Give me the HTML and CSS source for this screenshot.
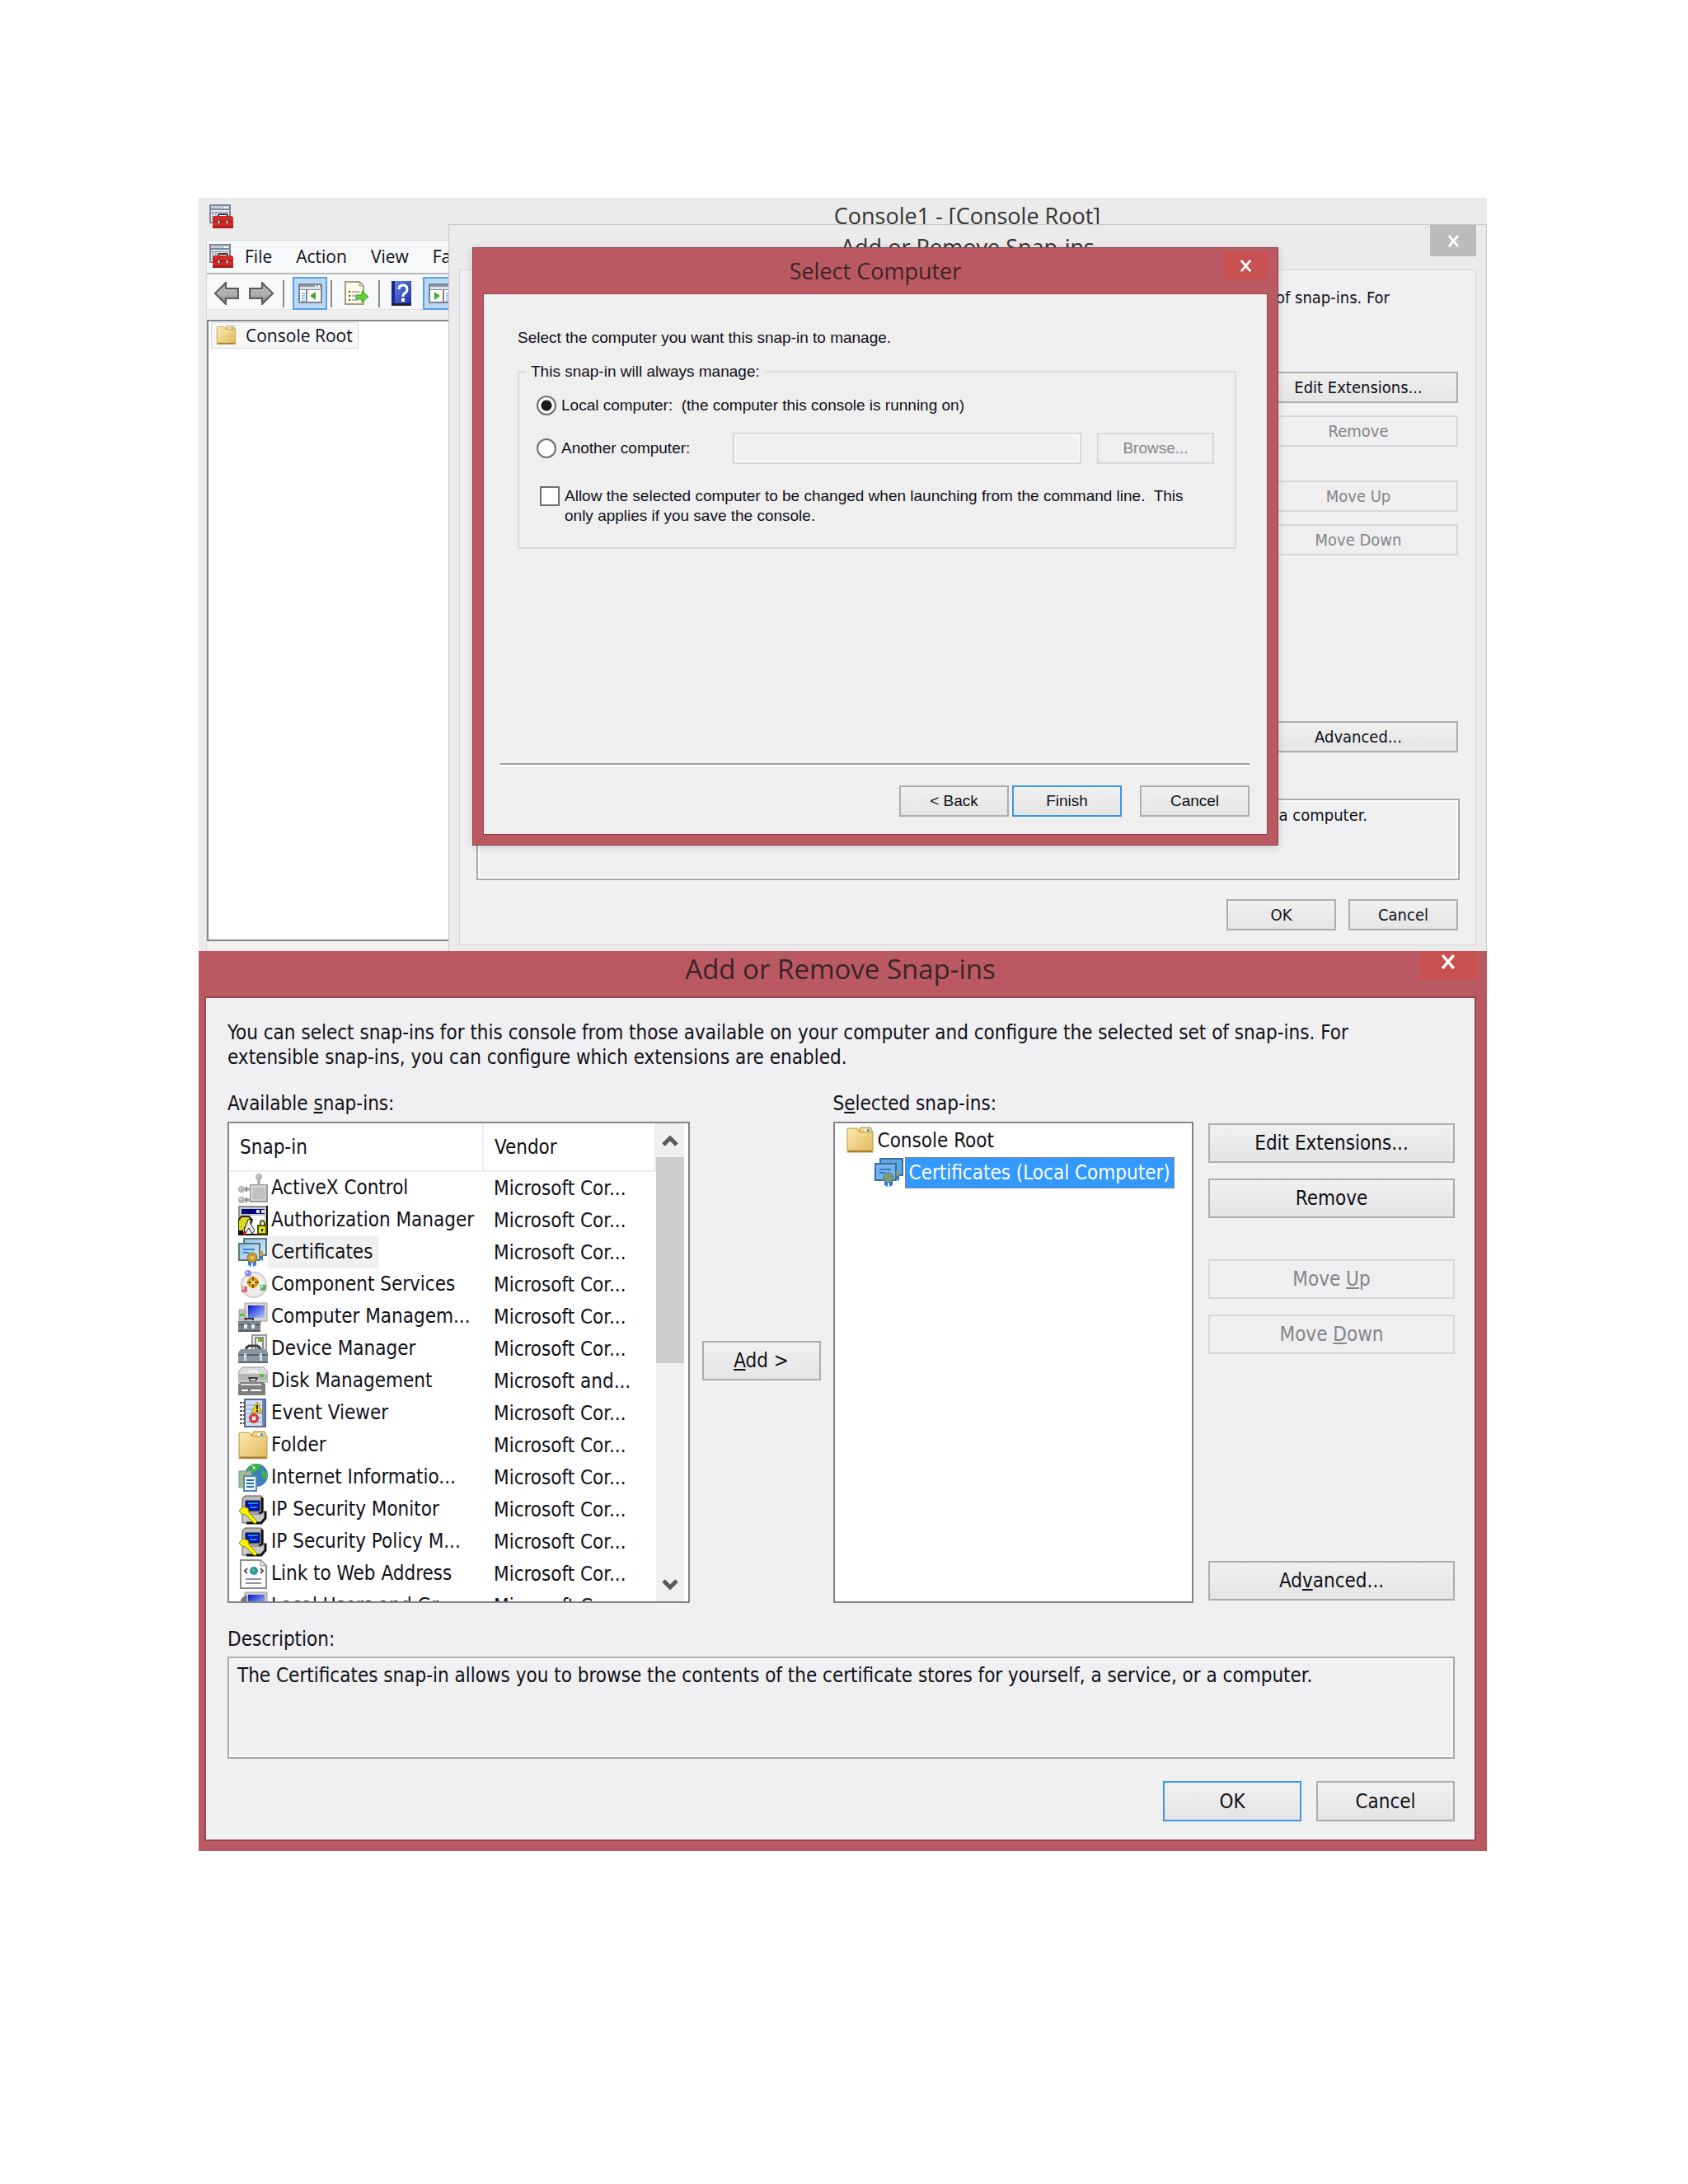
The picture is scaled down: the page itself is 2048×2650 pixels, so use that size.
FILE: index.html
```html
<!DOCTYPE html>
<html lang="en">
<head>
<meta charset="utf-8">
<title>Add or Remove Snap-ins</title>
<link rel="stylesheet" href="styles.css">
</head>
<body>
<svg class="sprite" aria-hidden="true">
  <defs>
    <linearGradient id="g-folder" x1="0" y1="0" x2="1" y2="1"><stop offset="0" stop-color="#fdebb0"/><stop offset="1" stop-color="#e3b65a"/></linearGradient>
    <linearGradient id="g-arrow" x1="0" y1="0" x2="0" y2="1"><stop offset="0" stop-color="#8c8c8c"/><stop offset=".5" stop-color="#b4b4b4"/><stop offset="1" stop-color="#7a7a7a"/></linearGradient>
    <linearGradient id="g-help" x1="0" y1="0" x2="1" y2="1"><stop offset="0" stop-color="#6a8ae6"/><stop offset="1" stop-color="#1c2fa6"/></linearGradient>
    <linearGradient id="g-screen" x1="0" y1="0" x2="1" y2="1"><stop offset="0" stop-color="#0018c8"/><stop offset="1" stop-color="#b8ccff"/></linearGradient>
    <linearGradient id="g-cert" x1="0" y1="0" x2="1" y2="1"><stop offset="0" stop-color="#8fc0e8"/><stop offset="1" stop-color="#d4ecfa"/></linearGradient>
  </defs>
  <symbol id="i-mmc" viewBox="0 0 29 29">
    <path d="M1 1h24v21H1z" fill="#e9eef5" stroke="#7d8797" stroke-width="2"/>
    <path d="M2 2h22v3H2z" fill="#c3cfe0"/><path d="M2 5h22v2H2zM2 9h22v1H2z" fill="#7d8797"/>
    <path d="M18 3h2v2h-2zM21 3h2v2h-2z" fill="#fff"/><path d="M3 12h3M3 15h3M3 18h3" stroke="#3a6fb0" stroke-width="1"/><path d="M8 10v12" stroke="#7d8797"/>
    <path d="M11 15v-2q0-1 1-1h9q1 0 1 1v2" fill="none" stroke="#333" stroke-width="2"/>
    <path d="M5 14h22l2 2v13H4V16z" fill="#d52a26"/><path d="M5 20h23v1H5z" fill="#8d1512"/><path d="M4 26h25v3H4z" fill="#b01c1a"/>
    <path d="M10 19h3v5h-3zM20 19h3v5h-3z" fill="#e8dcdc" stroke="#6b2020" stroke-width="1"/>
  </symbol>
  <symbol id="i-back" viewBox="0 0 30 28">
    <path d="M1 14L14 1v7h15v12H14v7z" fill="url(#g-arrow)" stroke="#5c5c5c" stroke-width="2"/><path d="M4 14L12 6v4h14" fill="none" stroke="#c9c9c9"/>
  </symbol>
  <symbol id="i-fwd" viewBox="0 0 30 28">
    <path d="M29 14L16 1v7H1v12h15v7z" fill="url(#g-arrow)" stroke="#5c5c5c" stroke-width="2"/><path d="M4 10h14V6l8 8" fill="none" stroke="#c9c9c9"/>
  </symbol>
  <symbol id="i-tree" viewBox="0 0 29 24">
    <path d="M1 1h27v22H1z" fill="#fff" stroke="#7a8494" stroke-width="2"/><path d="M2 2h25v2H2z" fill="#8d97a8"/><path d="M2 4h25v3H2z" fill="#dfe5ee"/><path d="M2 7h25v1H2z" fill="#7a8494"/>
    <path d="M20 2h2v2h-2zM24 2h2v2h-2z" fill="#fff"/><path d="M10 8v15" stroke="#7a8494" stroke-width="2"/><path d="M4 12h4M4 15h4M4 18h4M4 21h4" stroke="#3b7bd0" stroke-width="1"/><path d="M21 10v10l-7-5z" fill="#3fae2a"/>
  </symbol>
  <symbol id="i-actions" viewBox="0 0 29 24">
    <path d="M1 1h27v22H1z" fill="#fff" stroke="#7a8494" stroke-width="2"/><path d="M2 2h25v2H2z" fill="#8d97a8"/><path d="M2 4h25v3H2z" fill="#dfe5ee"/><path d="M2 7h25v1H2z" fill="#7a8494"/>
    <path d="M18 8v15" stroke="#7a8494" stroke-width="2"/><path d="M21 12h5M21 15h5M21 18h5M21 21h5" stroke="#3b7bd0" stroke-width="1"/><path d="M7 10v10l7-5z" fill="#3fae2a"/>
  </symbol>
  <symbol id="i-export" viewBox="0 0 30 30">
    <path d="M1 1h17l5 5v22H1z" fill="#fffde9" stroke="#a39b7c" stroke-width="2"/><path d="M18 1v5h5z" fill="#e4dfc2" stroke="#a39b7c"/>
    <path d="M5 12h2v2H5zM5 17h2v2H5zM5 22h2v2H5z" fill="#444"/><path d="M9 13h10M9 18h6M9 23h7" stroke="#6b6b6b" stroke-width="1"/>
    <path d="M14 17h7v-5l8 7-8 7v-4h-7z" fill="#5fd43c" stroke="#35a01f"/>
  </symbol>
  <symbol id="i-help" viewBox="0 0 24 30">
    <path d="M0 0h24v30H0z" fill="url(#g-help)"/><path d="M0 0h4v30H0z" fill="#16299a"/><path d="M0 27h24v3H0z" fill="#223"/>
    <path d="M9 10q0-5 5-5t5 5q0 3-3 5-2 1-2 4" fill="none" stroke="#fff" stroke-width="3"/><path d="M12 21h4v4h-4z" fill="#fff"/>
  </symbol>
  <symbol id="i-folder" viewBox="0 0 32 32">
    <path d="M15 4l2-3h11l2 3v4H15z" fill="#f5d98d" stroke="#b9923f"/><path d="M21 3h7v3h-7z" fill="#fff"/><path d="M24 3h3v3h-3z" fill="#4a9ad4"/>
    <path d="M1 4q0-2 2-2h9l3 4h16v24H1z" fill="url(#g-folder)" stroke="#bd9645"/><path d="M2 29h28" stroke="#a87d2c" stroke-width="2"/>
  </symbol>
  <symbol id="i-cert" viewBox="0 0 36 36">
    <path d="M7 1h27v20H7z" fill="url(#g-cert)" stroke="#56797c" stroke-width="2"/>
    <path d="M1 7h25v20H1z" fill="url(#g-cert)" stroke="#56797c" stroke-width="2"/><path d="M6 14h14M6 18h7" stroke="#3c7fd0" stroke-width="2"/>
    <path d="M12 27h4v8l-4-2zM18 27h4v6l-4 2z" fill="#2c7ede"/><circle cx="17" cy="24" r="6" fill="#c59b34" stroke="#8c6e22"/><circle cx="17" cy="24" r="2" fill="#ecd07c"/><path d="M27 22h3v6l-3-2z" fill="#2c7ede"/><path d="M26 16h4v6h-4z" fill="#c59b34"/>
  </symbol>
  <symbol id="i-cert-on" viewBox="0 0 36 36">
    <path d="M7 1h27v20H7z" fill="#5fa6e6" stroke="#3d6f9c" stroke-width="2"/>
    <path d="M1 7h25v20H1z" fill="#74b4ee" stroke="#3d6f9c" stroke-width="2"/><path d="M6 14h14M6 18h7" stroke="#2f73d0" stroke-width="2"/>
    <path d="M12 27h4v8l-4-2zM18 27h4v6l-4 2z" fill="#1f7cf0"/><circle cx="17" cy="24" r="6" fill="#7c9a78" stroke="#5b7a68"/><path d="M27 22h3v6l-3-2z" fill="#1f7cf0"/><path d="M26 16h4v6h-4z" fill="#7c9a78"/>
  </symbol>
  <symbol id="i-activex" viewBox="0 0 36 36">
    <path d="M25 3v12M4 19h14M4 32h14" stroke="#a2a2a2" stroke-width="3"/><path d="M15 14h20v20H15z" fill="#cfcfcf" stroke="#9a9a9a" stroke-width="2"/><path d="M18 17h14v14H18z" fill="#c2c2c4"/><path d="M16 15h18M16 15v18" stroke="#f0f0f0"/>
    <circle cx="25" cy="4" r="4" fill="#b5b5b5"/><circle cx="4" cy="19" r="4" fill="#b5b5b5"/><circle cx="4" cy="32" r="4" fill="#b5b5b5"/><path d="M10 16v6M10 29v6" stroke="#888" stroke-width="2"/><circle cx="24" cy="3" r="1" fill="#eee"/><circle cx="3" cy="18" r="1" fill="#eee"/><circle cx="3" cy="31" r="1" fill="#eee"/>
  </symbol>
  <symbol id="i-auth" viewBox="0 0 36 36">
    <path d="M0 0h36v36H0z" fill="#111"/><path d="M0 0h34v2H2v20H0z" fill="#8f8f8f"/><path d="M2 2h32v32H2z" fill="#c6c6c6"/><path d="M4 4h28v6H4z" fill="#00007e"/><path d="M22 5h4v4h-4zM28 5h4v4h-4z" fill="#ddd"/><path d="M4 12h28v22H4z" fill="#fff"/>
    <path d="M0 18l4-5h9l4 4-3 8-6 2v9H0z" fill="#d8d820" stroke="#222" stroke-width="2"/><path d="M12 17l3-1v6l5 8-3 4-4-7-4 6-2-3z" fill="#eee" stroke="#111" stroke-width="1"/><path d="M0 30h6v6H0z" fill="#111"/><path d="M6 32h3v3H6z" fill="#e00"/>
    <path d="M27 25v-4q0-3 2-3t3 3v4" fill="none" stroke="#555500" stroke-width="2"/><path d="M24 24h10v10H24z" fill="#e2e222" stroke="#555500" stroke-width="2"/><path d="M28 28h2v3h-2z" fill="#111"/>
  </symbol>
  <symbol id="i-com" viewBox="0 0 36 36">
    <circle cx="19" cy="18" r="15" fill="#ededed" stroke="#cfcfcf" stroke-width="2"/><circle cx="18" cy="15" r="7" fill="#f0b71c"/><path d="M18 8v14M11 15h14" stroke="#7d5206" stroke-width="2"/><circle cx="18" cy="15" r="5" fill="none" stroke="#9a6a0c"/><circle cx="18" cy="15" r="2" fill="#fff1b0"/>
    <circle cx="12" cy="4" r="4" fill="#8c8fe0"/><circle cx="11" cy="3" r="1" fill="#fff"/><path d="M4 20h7v7H4z" fill="#d8727c"/><path d="M5 21h2v2H5z" fill="#fff"/><path d="M27 18h7v7h-7z" fill="#5fae6c"/><path d="M28 19h2v2h-2z" fill="#fff"/>
  </symbol>
  <symbol id="i-compmgmt" viewBox="0 0 36 36">
    <path d="M8 1h27v22H8z" fill="#d9d6d0" stroke="#a3a19c"/><path d="M12 4h20v15H12z" fill="url(#g-screen)"/><path d="M1 9h7v13H1z" fill="#c3c3c3" stroke="#999"/><path d="M2 14h5v3H2z" fill="#3fc43a"/><path d="M22 23h6v3h-6z" fill="#b5b5b5"/>
    <path d="M9 22v-2h9v2" fill="none" stroke="#333" stroke-width="2"/><path d="M0 23h27v12H0z" fill="#77858f"/><path d="M0 27h27v1H0z" fill="#3f4a52"/><path d="M0 34h27v2H0z" fill="#505b63"/><path d="M7 27h4v5H7zM16 27h4v5h-4z" fill="#e4e9ec"/>
  </symbol>
  <symbol id="i-device" viewBox="0 0 36 36">
    <path d="M17 1h17v22H17z" fill="#f3f3f3" stroke="#9b9b9b" stroke-width="2"/><path d="M21 4h9v14h-9z" fill="none" stroke="#8a8a8a" stroke-width="2"/><path d="M24 5h5v4h-5z" fill="#62b82c"/>
    <path d="M10 19v-3l3-2h10l3 2v3" fill="none" stroke="#3a3f44" stroke-width="3"/><path d="M3 18h30l3 4v13H0V22z" fill="#8b98a2"/><path d="M0 24h36v2H0z" fill="#5a6770"/><path d="M0 33h36v2H0z" fill="#5a6770"/><path d="M7 23h3v9H7zM26 23h3v9h-3z" fill="#d6dde2"/>
  </symbol>
  <symbol id="i-disk" viewBox="0 0 36 36">
    <path d="M5 1h26l5 6v12H0V7z" fill="#dcdcdc" stroke="#909090"/><path d="M0 9h36v8H0z" fill="#b5b5b5"/><path d="M12 7q6-3 12 0" fill="none" stroke="#fff" stroke-width="2"/><path d="M12 13h12l-2 5h-8z" fill="#3a3a3a"/><path d="M15 15h6v2h-6z" fill="#eee"/><path d="M26 9h5v4h-5z" fill="#4cc232"/>
    <path d="M3 19h28l2 3v13H0V22z" fill="#7e7e7e"/><path d="M3 22h25" stroke="#ddd" stroke-width="2"/><path d="M4 29h8M15 29h13" stroke="#fff" stroke-width="2"/>
  </symbol>
  <symbol id="i-event" viewBox="0 0 36 36">
    <path d="M8 1h25v33H8z" fill="#cfe0f2" stroke="#56699a" stroke-width="2"/><path d="M29 2h3v31h-3z" fill="#6d85bb"/><path d="M10 8h18M10 13h18M10 18h18M10 23h18M10 28h18" stroke="#7e9cc8" stroke-width="1"/>
    <path d="M2 5h8M2 10h8M2 15h8M2 20h8M2 25h8M2 30h8" stroke="#555" stroke-width="2" stroke-dasharray="3 1"/>
    <path d="M23 4l6 13H16z" fill="#f2ce28" stroke="#a98d10"/><path d="M23 8v5M23 14v2" stroke="#222" stroke-width="2"/><circle cx="19" cy="24" r="6" fill="#cf3a40"/><path d="M17 22l4 4M21 22l-4 4" stroke="#fff" stroke-width="2"/>
  </symbol>
  <symbol id="i-iis" viewBox="0 0 36 36">
    <circle cx="22" cy="15" r="14" fill="#3b7fc0"/><path d="M13 4q8-5 15-2l-3 6-7 4-6-2zM28 8l7 4v8l-6-2z" fill="#3fb24a"/><path d="M17 3l4 3-2 2z" fill="#e9f7e9"/>
    <path d="M1 10h15v20H1z" fill="#a3bb86" stroke="#7394a6"/><path d="M7 16h15v18H7z" fill="#eef5fc" stroke="#5c86b4" stroke-width="2"/><path d="M10 21h9M10 25h9M10 29h9" stroke="#1c6fa6" stroke-width="2"/>
  </symbol>
  <symbol id="i-ipsec" viewBox="0 0 36 36">
    <path d="M8 1h20l2 3v17H8L5 18V4z" fill="#b9b9b9" stroke="#555" stroke-width="1"/><path d="M9 7h17v12H9z" fill="#0012c8" stroke="#111"/><path d="M12 10h12M14 15h9" stroke="#1a90c8" stroke-width="2"/><path d="M29 3v18l-4 2" fill="none" stroke="#111" stroke-width="3"/>
    <path d="M5 23h23l5-4v8l-4 7H5z" fill="#c9c9c9" stroke="#555" stroke-width="1"/><path d="M33 20v8l-5 6H10" fill="none" stroke="#111" stroke-width="3"/><path d="M1 19l5-5 6 2 1 5 10 11-3 3-11-11-5-1z" fill="#f6f200" stroke="#8c8a00"/>
  </symbol>
  <symbol id="i-link" viewBox="0 0 36 36">
    <path d="M3 1h24l7 7v27H3z" fill="#fff" stroke="#8d8d8d" stroke-width="2"/><path d="M27 1v7h7z" fill="#e8e8e8" stroke="#8d8d8d"/><circle cx="19" cy="14" r="5" fill="#2a93a8"/><path d="M17 11l4 2-3 3z" fill="#6cd06a"/>
    <path d="M11 11l-3 3 3 3M27 11l3 3-3 3" fill="none" stroke="#555" stroke-width="2"/><path d="M9 24h19M9 29h19" stroke="#8a93a5" stroke-width="2"/>
  </symbol>
  <symbol id="i-users" viewBox="0 0 36 36">
    <path d="M8 1h27v22H8z" fill="#c9c7c4" stroke="#a3a19c"/><path d="M12 4h20v15H12z" fill="url(#g-screen)"/><path d="M3 11q2-6 8-6l-2 12H3z" fill="#6b7a86"/>
  </symbol>
  <symbol id="i-x" viewBox="0 0 16 16"><path d="M2 1l12 14M14 1L2 15" stroke="#fff" stroke-width="3"/></symbol>
  <symbol id="i-up" viewBox="0 0 20 14"><path d="M2 12l8-8 8 8" fill="none" stroke="#5c5c60" stroke-width="5"/></symbol>
  <symbol id="i-down" viewBox="0 0 20 14"><path d="M2 2l8 8 8-8" fill="none" stroke="#5c5c60" stroke-width="5"/></symbol>
</svg>

<main class="page">
  <section class="desktop">
    <div class="console">
      <header class="console-title">
        <svg class="icon-app"><use href="#i-mmc"/></svg>
        <h1 class="title title-small">Console1 - [Console Root]</h1>
      </header>
      <div class="console-body">
        <nav class="menubar">
          <svg class="icon-app"><use href="#i-mmc"/></svg>
          <button class="menu">File</button>
          <button class="menu">Action</button>
          <button class="menu">View</button>
          <button class="menu">Favorites</button>
        </nav>
        <div class="toolbar">
          <button class="tool" aria-label="Back"><svg width="30" height="28"><use href="#i-back"/></svg></button>
          <button class="tool" aria-label="Forward"><svg width="30" height="28"><use href="#i-fwd"/></svg></button>
          <span class="sep"></span>
          <button class="tool tool-on" aria-label="Show or hide console tree"><svg width="29" height="24"><use href="#i-tree"/></svg></button>
          <span class="sep sep-near"></span>
          <button class="tool" aria-label="Export list"><svg width="30" height="30"><use href="#i-export"/></svg></button>
          <span class="sep"></span>
          <button class="tool" aria-label="Help"><svg width="24" height="30"><use href="#i-help"/></svg></button>
          <button class="tool tool-on" aria-label="Show or hide action pane"><svg width="29" height="24"><use href="#i-actions"/></svg></button>
        </div>
        <div class="pane">
          <div class="root-node"><svg width="27" height="24"><use href="#i-folder"/></svg><span>Console Root</span></div>
        </div>
      </div>
    </div>

    <section class="snapins-back">
      <button class="close close-grey" aria-label="Close"><svg width="15" height="15"><use href="#i-x"/></svg></button>
      <h2 class="title title-small">Add or Remove Snap-ins</h2>
      <div class="back-client">
        <p class="back-intro">of snap-ins. For</p>
        <div class="back-buttons">
          <button class="btn">Edit Extensions...</button>
          <button class="btn" disabled>Remove</button>
          <button class="btn btn-apart" disabled>Move Up</button>
          <button class="btn" disabled>Move Down</button>
          <button class="btn btn-far">Advanced...</button>
        </div>
        <div class="back-desc">a computer.</div>
        <div class="back-footer">
          <button class="btn">OK</button>
          <button class="btn">Cancel</button>
        </div>
      </div>
    </section>

    <form class="select-computer">
      <button class="close close-red" type="button" aria-label="Close"><svg width="15" height="15"><use href="#i-x"/></svg></button>
      <h2 class="title title-small">Select Computer</h2>
      <div class="sc-client">
        <div class="sc-content">
          <p class="sc-intro">Select the computer you want this snap-in to manage.</p>
          <fieldset class="group">
            <legend>This snap-in will always manage:</legend>
            <div class="options">
              <label class="option"><input class="radio" type="radio" name="target" checked><span>Local computer:&nbsp; (the computer this console is running on)</span></label>
              <div class="another">
                <label class="option"><input class="radio" type="radio" name="target"><span>Another computer:</span></label>
                <input class="field" type="text" aria-label="Another computer name" disabled>
                <button class="btn" type="button" disabled>Browse...</button>
              </div>
              <label class="option option-check"><input class="check" type="checkbox"><span>Allow the selected computer to be changed when launching from the command line.&nbsp; This<br>only applies if you save the console.</span></label>
            </div>
          </fieldset>
        </div>
        <div class="sc-footer">
          <button class="btn" type="button">&lt; Back</button>
          <button class="btn btn-default" type="button">Finish</button>
          <button class="btn btn-gap" type="button">Cancel</button>
        </div>
      </div>
    </form>
  </section>

  <section class="snapins">
    <button class="close close-red close-big" aria-label="Close"><svg width="18" height="18"><use href="#i-x"/></svg></button>
    <h2 class="title title-large">Add or Remove Snap-ins</h2>
    <div class="client">
      <p class="intro">You can select snap-ins for this console from those available on your computer and configure the selected set of snap-ins. For<br>extensible snap-ins, you can configure which extensions are enabled.</p>
      <div class="columns">
        <h3 class="label label-available">Available <u>s</u>nap-ins:</h3>
        <h3 class="label label-selected">S<u>e</u>lected snap-ins:</h3>
        <div class="list">
          <div class="list-view">
            <table class="snap-table">
              <thead><tr><th class="col-name">Snap-in</th><th>Vendor</th></tr></thead>
              <tbody>
                <tr><td><svg class="icon"><use href="#i-activex"/></svg><span>ActiveX Control</span></td><td>Microsoft Cor...</td></tr>
                <tr><td><svg class="icon"><use href="#i-auth"/></svg><span>Authorization Manager</span></td><td>Microsoft Cor...</td></tr>
                <tr class="current"><td><svg class="icon"><use href="#i-cert"/></svg><span>Certificates</span></td><td>Microsoft Cor...</td></tr>
                <tr><td><svg class="icon"><use href="#i-com"/></svg><span>Component Services</span></td><td>Microsoft Cor...</td></tr>
                <tr><td><svg class="icon"><use href="#i-compmgmt"/></svg><span>Computer Managem...</span></td><td>Microsoft Cor...</td></tr>
                <tr><td><svg class="icon"><use href="#i-device"/></svg><span>Device Manager</span></td><td>Microsoft Cor...</td></tr>
                <tr><td><svg class="icon"><use href="#i-disk"/></svg><span>Disk Management</span></td><td>Microsoft and...</td></tr>
                <tr><td><svg class="icon"><use href="#i-event"/></svg><span>Event Viewer</span></td><td>Microsoft Cor...</td></tr>
                <tr><td><svg class="icon"><use href="#i-folder"/></svg><span>Folder</span></td><td>Microsoft Cor...</td></tr>
                <tr><td><svg class="icon"><use href="#i-iis"/></svg><span>Internet Informatio...</span></td><td>Microsoft Cor...</td></tr>
                <tr><td><svg class="icon"><use href="#i-ipsec"/></svg><span>IP Security Monitor</span></td><td>Microsoft Cor...</td></tr>
                <tr><td><svg class="icon"><use href="#i-ipsec"/></svg><span>IP Security Policy M...</span></td><td>Microsoft Cor...</td></tr>
                <tr><td><svg class="icon"><use href="#i-link"/></svg><span>Link to Web Address</span></td><td>Microsoft Cor...</td></tr>
                <tr><td><svg class="icon"><use href="#i-users"/></svg><span>Local Users and Gr...</span></td><td>Microsoft Cor...</td></tr>
              </tbody>
            </table>
          </div>
          <div class="scrollbar">
            <button class="scroll-arrow" aria-label="Scroll up"><svg width="20" height="14"><use href="#i-up"/></svg></button>
            <div class="track"><div class="thumb"></div></div>
            <button class="scroll-arrow" aria-label="Scroll down"><svg width="20" height="14"><use href="#i-down"/></svg></button>
          </div>
        </div>
        <button class="btn btn-add"><u>A</u>dd &gt;</button>
        <ul class="tree">
          <li class="node"><svg class="icon-node"><use href="#i-folder"/></svg><span>Console Root</span></li>
          <li class="node node-child"><svg class="icon"><use href="#i-cert-on"/></svg><span class="selected">Certificates (Local Computer)</span></li>
        </ul>
        <div class="actions">
          <button class="btn">Edit Extensions...</button>
          <button class="btn">Remove</button>
          <button class="btn btn-apart" disabled>Move <u>U</u>p</button>
          <button class="btn" disabled>Move <u>D</u>own</button>
          <button class="btn btn-last">Ad<u>v</u>anced...</button>
        </div>
      </div>
      <h3 class="label label-desc">Description:</h3>
      <div class="desc">The Certificates snap-in allows you to browse the contents of the certificate stores for yourself, a service, or a computer.</div>
      <div class="footer">
        <button class="btn btn-default">OK</button>
        <button class="btn">Cancel</button>
      </div>
    </div>
  </section>
</main>
</body>
</html>
```
FILE: styles.css
```css
* { box-sizing: border-box; }
body { margin: 0; background: #fff; color: #101018; }
h1, h2, h3, p, ul { margin: 0; padding: 0; font-weight: 400; }
svg { display: block; flex: none; }
button { font: inherit; color: inherit; margin: 0; padding: 0; border: 0; background: none; white-space: nowrap; }
.sprite { position: absolute; width: 0; height: 0; }

.page { padding: 240px 244px 404px 241px; }
.title { font-family: "Open Sans", "Noto Sans", sans-serif; text-align: center; white-space: nowrap; }
.title-small { font-size: 27px; }
.title-large { font-size: 33px; line-height: 43px; height: 55px; color: #3a2428; }

.btn { height: 38px; border: 2px solid #adadb0; background: linear-gradient(#f0f0f0, #e5e5e6); color: #101018; text-align: center; }
.btn:disabled { border-color: #d8d8da; background: #efeef0; color: #85858a; }
.btn-default { border-color: #3c96ea; }

.close { position: absolute; display: flex; align-items: center; justify-content: center; }
.close-grey { top: 0; right: 12px; width: 56px; height: 38px; background: #bcbcbc; }
.close-red { top: 4px; right: 12px; width: 54px; height: 35px; background: #c75050; }
.close-big { top: 0; width: 70px; height: 34px; padding-bottom: 8px; }

/* Upper desktop: console with two stacked windows */
.desktop { position: relative; height: 914px; overflow: hidden; background: #ebebeb; }
.console { display: flex; flex-direction: column; height: 100%; font: 21px/30px "Open Sans", "Noto Sans", sans-serif; }
.console-title { display: flex; height: 51px; padding-left: 13px; }
.console-title .icon-app { margin-top: 8px; }
.console-title .title { flex: 1; padding-left: 260px; line-height: 44px; color: #333; }
.icon-app { width: 29px; height: 29px; }
.console-body { display: flex; flex-direction: column; flex: 1; margin-left: 9px; padding-bottom: 12px; border-top: 1px solid #d9d9dc; border-left: 1px solid #d9d9dc; background: #f0f0f1; }
.menubar { display: flex; align-items: center; height: 41px; padding: 0 0 2px 3px; border-bottom: 2px solid #b9bbbf; background: #f7f8fa; }
.menubar .icon-app { margin-right: 14px; }
.menu { margin-right: 29px; }
.toolbar { display: flex; align-items: center; gap: 10px; height: 43px; margin-bottom: 12px; padding: 4px 0 0 8px; border-bottom: 1px solid #e2e2e4; background: #f7f8fa; }
.tool { display: flex; align-items: center; justify-content: center; min-width: 32px; }
.tool-on { width: 42px; height: 40px; border: 2px solid #5a9fe0; background: #b9d9f7; }
.sep { width: 2px; height: 33px; background: #8b8b8e; }
.sep-near { margin: 0 4px 0 -6px; }
.pane { flex: 1; padding: 1px 3px; border: 2px solid #828489; background: #fff; }
.root-node { display: inline-flex; align-items: center; gap: 10px; height: 32px; padding: 0 6px 0 4px; border: 1px solid #d5d6d9; background: #f7f7f8; }

.snapins-back { position: absolute; top: 32px; right: 0; bottom: 0; left: 303px; border: 1px solid #c9c9cc; border-bottom: 0; background: #ebebec; font: 20px/24px "DejaVu Sans Condensed", "DejaVu Sans", sans-serif; }
.snapins-back .title { line-height: 54px; color: #333; }
.back-client { display: flex; flex-direction: column; align-items: flex-end; height: 820px; margin: 0 12px; padding: 21px 21px 0 20px; border: 1px solid #d6d6d9; background: #f0eff1; }
.back-intro { margin: 0 83px 78px 0; }
.back-buttons { display: flex; flex-direction: column; gap: 15px; width: 242px; }
.back-buttons .btn-apart { margin-top: 26px; }
.back-buttons .btn-far { margin-top: 186px; }
.back-desc { align-self: stretch; height: 99px; margin: 56px -2px 23px 0; padding: 6px 110px 0 0; border: 2px solid #a9a9ad; text-align: right; box-shadow: inset 0 0 0 2px #fff; }
.back-footer { display: flex; gap: 15px; }
.back-footer .btn { width: 133px; }

.select-computer { position: absolute; top: 60px; left: 332px; right: 253px; height: 726px; padding: 0 12px; border: 1px solid #8b4049; background: #ba5962; box-shadow: 0 2px 10px rgba(0, 0, 0, .15); font: 19px/24px "Liberation Sans", Arial, sans-serif; }
.select-computer .title { line-height: 55px; color: #3a2428; }
.sc-client { display: flex; flex-direction: column; height: 657px; border: 1px solid #8b4049; background: #f0eff0; }
.sc-content { flex: 1; padding: 41px 37px 0 41px; }
.group { margin: 17px 0 0; padding: 0 25px 26px 8px; border: 2px solid #dcdcdf; }
.group legend { padding: 0 6px; }
.options { padding: 17px 0 0 13px; }
.option { display: flex; align-items: center; gap: 6px; white-space: nowrap; }
.another { display: grid; grid-template-columns: 238px 1fr 142px; align-items: center; margin: 21px 0 27px; }
.another .field { margin-right: 19px; }
.field { height: 38px; min-width: 0; border: 2px solid #d8d8db; background: #f0eff1; box-shadow: inset 0 0 0 2px #fafafa; }
.radio, .check { appearance: none; flex: none; width: 24px; height: 24px; margin: 0; border: 2px solid #6e6e72; background: #fff; }
.radio { border-radius: 50%; }
.radio:checked { background: radial-gradient(circle, #1c1c1e 0 6px, #fff 7px); }
.option-check { align-items: flex-start; padding-left: 4px; }
.sc-footer { display: flex; justify-content: flex-end; gap: 4px; margin: 0 21px 0 20px; padding: 25px 0 21px; border-top: 2px solid #9d9da1; box-shadow: inset 0 2px 0 #fff; }
.sc-footer .btn { width: 133px; }
.sc-footer .btn-gap { margin-left: 18px; }

/* Lower dialog */
.snapins { position: relative; padding: 0 13px 12px 7px; background: #ba5962; font: 24px/30px "DejaVu Sans Condensed", "DejaVu Sans", sans-serif; }
.client { padding: 27px 24px 22px 26px; border: 2px solid #97444e; background: #f0eff1; }
.intro { margin: 0 0 26px; white-space: nowrap; }
.columns { display: grid; grid-template-columns: 560fr 144px 437fr 302px; column-gap: 15px; }
.label { font-size: 24px; line-height: 30px; }
.label-available { grid-column: 1 / 3; margin-bottom: 7px; }
.label-selected { grid-column: 3 / 5; }
.list { display: flex; height: 584px; border: 2px solid #828489; background: #fff; }
.list-view { flex: 1; overflow: hidden; min-width: 0; }
.snap-table { width: 100%; table-layout: fixed; border-collapse: collapse; }
.snap-table th { height: 58px; padding: 0 0 0 13px; border-right: 2px solid #ececf6; border-bottom: 2px solid #ececf6; font-weight: 400; text-align: left; }
.snap-table .col-name { width: 308px; }
.snap-table td { height: 39px; padding: 0 0 0 13px; white-space: nowrap; }
.snap-table td:first-child { display: flex; align-items: center; padding-left: 11px; }
.snap-table td span { padding: 0 8px 0 4px; line-height: 39px; }
.current td span { background: #f0f0f0; }
.icon { width: 36px; height: 36px; }
.scrollbar { display: flex; flex-direction: column; width: 34px; margin-right: 5px; background: #f0f0f1; }
.scroll-arrow { display: flex; align-items: center; justify-content: center; height: 41px; }
.track { flex: 1; }
.thumb { height: 250px; background: #cdcdcf; }
.btn-add { height: 48px; margin-top: 266px; }
.tree { list-style: none; border: 2px solid #828489; background: #fff; padding: 1px 0 0 14px; }
.node { display: flex; align-items: center; gap: 5px; height: 39px; }
.icon-node { width: 33px; height: 33px; }
.node-child { gap: 1px; padding-left: 34px; }
.selected { padding: 0 4px; border: 1px dotted #c8762a; background: #3399ff; color: #fff; line-height: 36px; }
.actions { display: flex; flex-direction: column; gap: 19px; padding: 2px 0 3px 3px; }
.actions .btn { height: 48px; }
.actions .btn-apart { margin-top: 31px; }
.actions .btn-last { margin-top: auto; }
.label-desc { margin: 29px 0 6px; }
.desc { height: 124px; padding: 6px 10px; border: 2px solid #a9a9ad; box-shadow: inset 0 0 0 2px #fafafa; white-space: nowrap; }
.footer { display: flex; justify-content: flex-end; gap: 18px; margin-top: 27px; }
.footer .btn { width: 168px; height: 49px; }
```
